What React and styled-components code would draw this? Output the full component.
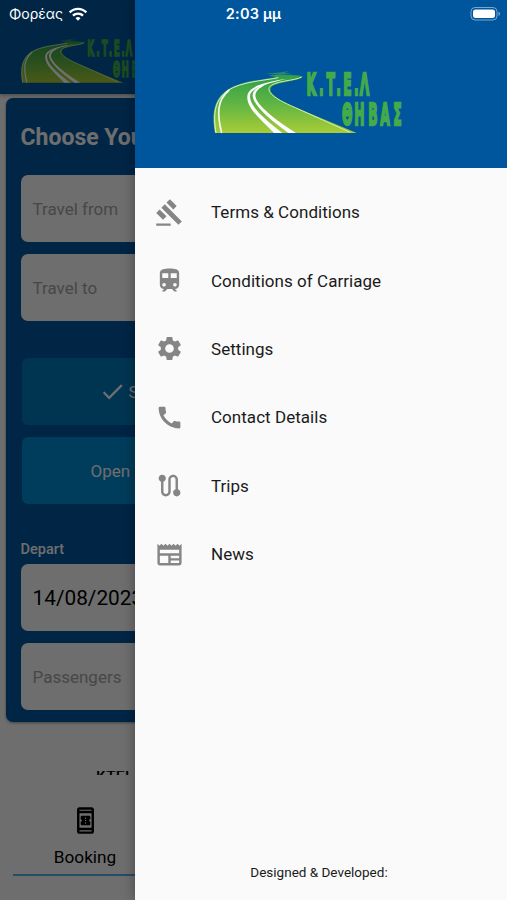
import React from 'react';
import styled, { createGlobalStyle } from 'styled-components';
import {
    MdCall,
    MdCheck,
    MdGavel,
    MdNewspaper,
    MdOutlineBookOnline,
    MdRoute,
    MdSettings,
    MdTrain,
    MdWifi,
} from 'react-icons/md';


const GlobalStyle = createGlobalStyle`
    * {
        box-sizing: border-box;
    }
    body {
        margin: 0;
        font-family: Roboto, sans-serif;
        color: #1a1a1a;
    }
`;

const Screen = styled.div`
    position: relative;
    width: 507px;
    height: 900px;
    overflow: hidden;
    background: #fafafa;
`;

const Page = styled.div`
    display: flex;
    flex-direction: column;
    height: 100%;
    color: #000;
`;

const AppBar = styled.header`
    height: 94px;
    flex-shrink: 0;
    padding: 37px 0 0 20px;
    background: #00569d;
    box-shadow: 0 1px 4px rgba(0, 0, 0, 0.4);
`;

const SearchCard = styled.section`
    display: flex;
    flex-direction: column;
    height: 624px;
    flex-shrink: 0;
    margin: 4px 6px 0;
    padding: 0 14.5px;
    border-radius: 7px;
    background: #00569d;
    box-shadow: 0 1px 3px rgba(0, 0, 0, 0.4);
`;

const Title = styled.h1`
    margin: 26px 0 23px;
    font-size: 23px;
    line-height: 28px;
    font-weight: 700;
    color: #fafafa;
    white-space: nowrap;
`;

const Field = styled.div`
    display: flex;
    align-items: center;
    height: 67px;
    flex-shrink: 0;
    margin-bottom: 12px;
    padding: 1.5px 0 0 12px;
    border-radius: 7px;
    background: #fafafa;
    font-size: ${(props) => (props.$filled ? '20.8px' : '17px')};
    color: ${(props) => (props.$filled ? '#000' : '#a3a3a3')};
`;

const TripButton = styled.div`
    display: flex;
    align-items: center;
    height: 67px;
    flex-shrink: 0;
    margin: 0 1px 12px;
    padding-left: ${(props) => props.$inset}px;
    border-radius: 6px;
    background: ${(props) => (props.$selected ? '#007ab8' : '#0089cf')};
    font-size: 17px;
    color: #fafafa;
    svg {
        margin-right: 3px;
    }
`;

const ButtonGroup = styled.div`
    margin-top: 25px;
`;

const Label = styled.div`
    margin: 25px 0 5px;
    font-size: 14.5px;
    line-height: 18px;
    font-weight: 500;
    color: #fafafa;
`;

const Notice = styled.div`
    height: 4px;
    flex-shrink: 0;
    margin: 49px 0 0 96px;
    overflow: hidden;
    font-size: 16px;
    line-height: 12px;
    font-weight: 500;
`;

const BottomNav = styled.nav`
    display: flex;
    flex: 1;
    padding: 31px 0 0 13px;
`;

const Tab = styled.div`
    display: flex;
    flex-direction: column;
    align-items: center;
    width: 144px;
    height: 70px;
    border-bottom: 2px solid #5ab0f0;
    font-size: 17.2px;
    span {
        margin-top: 11px;
        line-height: 22px;
    }
`;

const Scrim = styled.div`
    position: absolute;
    inset: 0;
    background: rgba(0, 0, 0, 0.56);
`;

const Drawer = styled.aside`
    position: absolute;
    top: 0;
    right: 0;
    bottom: 0;
    left: 135px;
    display: flex;
    flex-direction: column;
    background: #fafafa;
    box-shadow: 0 0 12px rgba(0, 0, 0, 0.35);
`;

const DrawerHeader = styled.div`
    height: 168px;
    padding: 69px 0 0 77px;
    background: #00569d;
`;

const Menu = styled.ul`
    flex: 1;
    margin: 0;
    padding: 10px 0 0;
    list-style: none;
`;

const MenuItem = styled.li`
    display: flex;
    align-items: center;
    height: 68.4px;
    padding-left: 20px;
    font-size: 17px;
    letter-spacing: 0.04px;
    svg {
        margin-right: 27px;
        color: #858585;
    }
`;

const Footer = styled.div`
    height: 38px;
    padding-right: 4px;
    font-size: 13.5px;
    line-height: 20px;
    text-align: center;
`;

const StatusBar = styled.div`
    position: absolute;
    top: 0;
    left: 0;
    right: 0;
    display: grid;
    grid-template-columns: 1fr auto 1fr;
    align-items: center;
    height: 27px;
    padding: 0 9px;
    font-family: Inter, sans-serif;
    font-size: 14px;
    color: #fff;
`;

const Carrier = styled.div`
    display: flex;
    align-items: center;
    gap: 5px;
`;

const Clock = styled.div`
    font-size: 14.5px;
    font-weight: 600;
    letter-spacing: 0.2px;
`;

const Battery = styled.svg`
    justify-self: end;
    margin-right: -4px;
`;

const LogoSvg = styled.svg`
    display: block;
    overflow: visible;
`;

const Logo = ({ width }) => (
    <LogoSvg width={width} height={(width * 198) / 576} viewBox="36 56 576 198">
        <defs>
            <linearGradient id="grass" x1="0" y1="0" x2="0" y2="1">
                <stop offset="0" stopColor="#2f9e49" />
                <stop offset="0.5" stopColor="#5fb544" />
                <stop offset="1" stopColor="#a9cc35" />
            </linearGradient>
        </defs>
        <path d="M198 70L245 66L270 61L252 67L276 69L240 73Z" fill="#2b8870" />
        <path
            d="M45 248C34 190 42 145 82 118C130 88 196 89 230 80L205 76C240 72 286 73 307 78C312 88 245 94 221 105C196 118 222 142 268 163L470 248Z"
            fill="url(#grass)"
        />
        <g fill="none" stroke="#f3faed">
            <path d="M48 248C38 184 46 148 84 120C125 94 190 91 235 82" strokeWidth="2.5" />
            <path d="M65 248C51 192 50 149 88 119" strokeWidth="5" />
            <path d="M305 80C285 92 219 91 208 111C199 132 245 154 286 172L450 246" strokeWidth="3" stroke="#d9eba8" />
        </g>
        <path d="M222 248C178 204 139 171 142 137C144 106 207 93 259 86C209 98 151 111 150 137C149 169 194 207 247 248Z" fill="#fff" />
        <path d="M265 248C218 214 162 169 158 137C156 117 180 106 206 99C182 110 166 120 166 137C169 165 226 208 288 248Z" fill="#fff" />
        <g
            fill="#43ab4b"
            stroke="#43ab4b"
            strokeWidth="7"
            fontFamily="'DejaVu Sans', sans-serif"
            fontWeight="700"
            fontSize="88"
            transform="scale(0.42 1)"
        >
            <text x="760 850 903 974 1023 1100 1142" y="134">Κ.Τ.Ε.Λ</text>
            <text x="1014 1102 1201 1287 1381" y="224">ΘΗΒΑΣ</text>
        </g>
    </LogoSvg>
);

const menuItems = [
    { label: 'Terms & Conditions', Icon: MdGavel },
    { label: 'Conditions of Carriage', Icon: MdTrain },
    { label: 'Settings', Icon: MdSettings },
    { label: 'Contact Details', Icon: MdCall },
    { label: 'Trips', Icon: MdRoute },
    { label: 'News', Icon: MdNewspaper },
];

const BookingPage = () => (
    <Page>
        <AppBar>
            <Logo width={137} />
        </AppBar>
        <SearchCard>
            <Title>Choose Your Trip</Title>
            <Field>Travel from</Field>
            <Field>Travel to</Field>
            <ButtonGroup>
                <TripButton $selected $inset={77}>
                    <MdCheck size={27} />
                    Single
                </TripButton>
                <TripButton $inset={69}>Open</TripButton>
            </ButtonGroup>
            <Label>Depart</Label>
            <Field $filled>14/08/2023</Field>
            <Field>Passengers</Field>
        </SearchCard>
        <Notice>KTEL</Notice>
        <BottomNav>
            <Tab>
                <MdOutlineBookOnline size={29} />
                <span>Booking</span>
            </Tab>
        </BottomNav>
    </Page>
);

const App = () => {
    return (
        <>
            <GlobalStyle />
            <Screen>
                <BookingPage />
                <Scrim />
                <Drawer>
                    <DrawerHeader>
                        <Logo width={192} />
                    </DrawerHeader>
                    <Menu>
                        {menuItems.map(({ label, Icon }) => (
                            <MenuItem key={label}>
                                <Icon size={29} />
                                <span>{label}</span>
                            </MenuItem>
                        ))}
                    </Menu>
                    <Footer>Designed &amp; Developed:</Footer>
                </Drawer>
                <StatusBar>
                    <Carrier>
                        <span>Φορέας</span>
                        <MdWifi size={20} />
                    </Carrier>
                    <Clock>2:03 μμ</Clock>
                    <Battery width="32" height="16" viewBox="0 0 32 16">
                        <rect x="1" y="1.5" width="26" height="12.5" rx="4" fill="none" stroke="#78a7cd" />
                        <rect x="3" y="3.5" width="22" height="8.5" rx="2.5" fill="#fff" />
                        <path d="M28.5 5.5c2 .8 2 3.7 0 4.5z" fill="#78a7cd" />
                    </Battery>
                </StatusBar>
            </Screen>
        </>
    );
};

export default App;
